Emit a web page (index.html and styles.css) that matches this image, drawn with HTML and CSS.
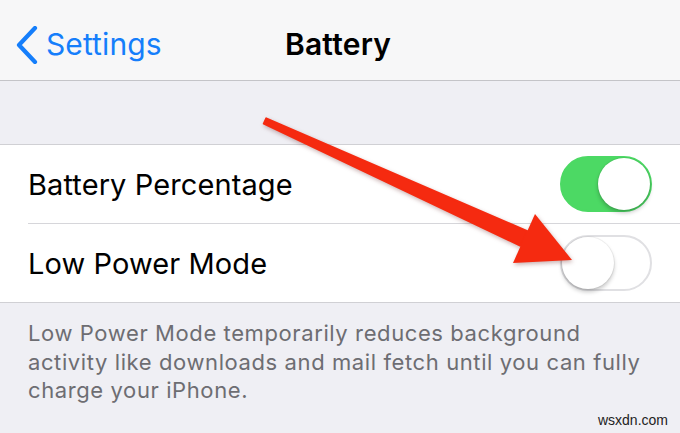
FILE: index.html
```html
<!DOCTYPE html>
<html lang="en">
<head>
  <meta charset="UTF-8">
  <title>Battery</title>
  <meta name="viewport" content="width=device-width, initial-scale=1.0">
  <link rel="stylesheet" href="styles.css">
</head>
<body>
  <!-- Navigation bar -->
  <header class="nav-bar">
    <a class="nav-back" href="#">
      <svg class="nav-chevron" viewBox="0 0 22 38" width="22" height="38">
        <path d="M19 2 L3 19 L19 36" fill="none" stroke="#157efb" stroke-width="4.2" stroke-linecap="round" stroke-linejoin="round"/>
      </svg>
      <span>Settings</span>
    </a>
    <h1 class="nav-title">Battery</h1>
    <span class="nav-spacer"></span>
  </header>

  <div class="group-gap"></div>

  <!-- Settings group -->
  <ul class="settings-group">
    <li class="settings-row">
      <span class="row-label">Battery Percentage</span>
      <span class="switch switch-on"><span class="switch-knob"></span></span>
    </li>
    <li class="settings-row">
      <span class="row-label">Low Power Mode</span>
      <span class="switch"><span class="switch-knob"></span></span>
    </li>
  </ul>

  <p class="group-footer">
    Low Power Mode temporarily reduces background<br>
    activity like downloads and mail fetch until you can fully<br>
    charge your iPhone.
  </p>

  <!-- Red pointer arrow drawn over the list -->
  <svg class="pointer-arrow" viewBox="0 0 680 433" width="680" height="433">
    <polygon points="263.8,123.7 266.2,118.3 527.3,231.2 520.7,245.8" fill="#f52a10" stroke="#f52a10" stroke-width="2" stroke-linejoin="round"/>
    <polygon points="535,214 572,260 513,263" fill="#f52a10"/>
  </svg>

  <span class="watermark">wsxdn.com</span>
</body>
</html>
```

FILE: styles.css
```css
html, body { margin: 0; padding: 0; }
body {
  position: relative;
  width: 680px; height: 433px; overflow: hidden;
  background: #efeff4;
  font-family: Inter, "Liberation Sans", Arial, sans-serif;
  color: #000;
}

/* Top navigation */
.nav-bar {
  height: 81px;
  box-sizing: border-box;
  padding: 7px 20px 0 16px;
  display: flex; align-items: center; justify-content: space-between;
  background: #f7f7f8;
  border-bottom: 1px solid #c4c4c8;
}
.nav-back {
  display: flex; align-items: center; gap: 8px;
  width: 160px;
  color: #157efb; text-decoration: none;
  font-size: 30px; letter-spacing: 0.1px;
}
.nav-chevron { display: block; margin-top: 2px; }
.nav-title {
  margin: 0;
  font-size: 30px; font-weight: 600; letter-spacing: 0.2px;
}
.nav-spacer { width: 160px; }

.group-gap { height: 63px; }

/* Grouped list */
.settings-group {
  list-style: none; margin: 0; padding: 0 0 0 28px;
  background: #fff;
  border-top: 1px solid #d0d0d4;
  border-bottom: 1px solid #d0d0d4;
}
.settings-row {
  height: 78px;
  display: flex; align-items: center; justify-content: space-between;
  padding-right: 28px;
}
.settings-row + .settings-row { border-top: 1px solid #d6d6da; }
.row-label { font-size: 29px; letter-spacing: 0.1px; }

/* iOS style switch */
.switch {
  position: relative;
  width: 92px; height: 56px;
  box-sizing: border-box;
  border-radius: 28px;
  border: 2px solid #e0e0e3;
  background: #fff;
}
.switch-knob {
  position: absolute; top: 0; left: 0;
  width: 52px; height: 52px;
  border-radius: 50%;
  background: #fff;
  box-shadow: 0 3px 4px rgba(0,0,0,0.22), 0 0 0 1px rgba(0,0,0,0.05);
}
.switch-on { background: #4cd964; border-color: #4cd964; }
.switch-on .switch-knob { left: auto; right: 0; }

.group-footer {
  margin: 0;
  padding: 16px 20px 0 28px;
  font-size: 22px; line-height: 28.6px; letter-spacing: 0.6px;
  color: #6d6d72;
  white-space: nowrap;
}

.pointer-arrow {
  position: absolute; left: 0; top: 0;
  pointer-events: none;
  filter: drop-shadow(1px 2px 2px rgba(80,0,0,0.3));
}

.watermark {
  position: absolute; right: 12px; bottom: 5px;
  font-family: "Liberation Sans", Arial, sans-serif;
  font-size: 14px; color: #222;
}
```
